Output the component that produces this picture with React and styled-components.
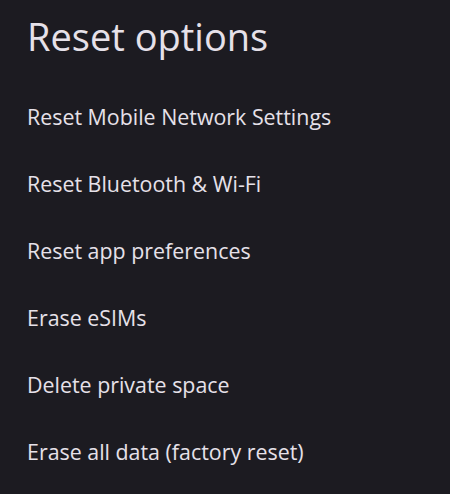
import React from 'react';
import styled, { createGlobalStyle } from 'styled-components';

const GlobalStyle = createGlobalStyle`
  html, body {
    margin: 0;
    padding: 0;
    background: #1c1b21;
  }
  body {
    font-family: "Open Sans", Roboto, sans-serif;
  }
`;

const options = [
  'Reset Mobile Network Settings',
  'Reset Bluetooth & Wi-Fi',
  'Reset app preferences',
  'Erase eSIMs',
  'Delete private space',
  'Erase all data (factory reset)',
];

const Screen = styled.div`
  width: 450px;
  height: 494px;
  overflow: hidden;
  background: #1c1b21;
  color: #e6e1e9;
  display: flex;
  flex-direction: column;
`;

const Title = styled.h1`
  margin: 0;
  padding: 12px 0 0 27px;
  font-size: 38px;
  font-weight: 400;
  line-height: 48px;
  letter-spacing: 0;
`;

const List = styled.div`
  display: flex;
  flex-direction: column;
  margin-top: 23px;
`;

const Row = styled.div`
  height: 67px;
  display: flex;
  align-items: center;
  padding-left: 27px;
  font-size: 21.4px;
  letter-spacing: 0;
`;

export default function App() {
  return (
    <Screen>
      <GlobalStyle />
      <Title>Reset options</Title>
      <List>
        {options.map((o) => (
          <Row key={o}>{o}</Row>
        ))}
      </List>
    </Screen>
  );
}
